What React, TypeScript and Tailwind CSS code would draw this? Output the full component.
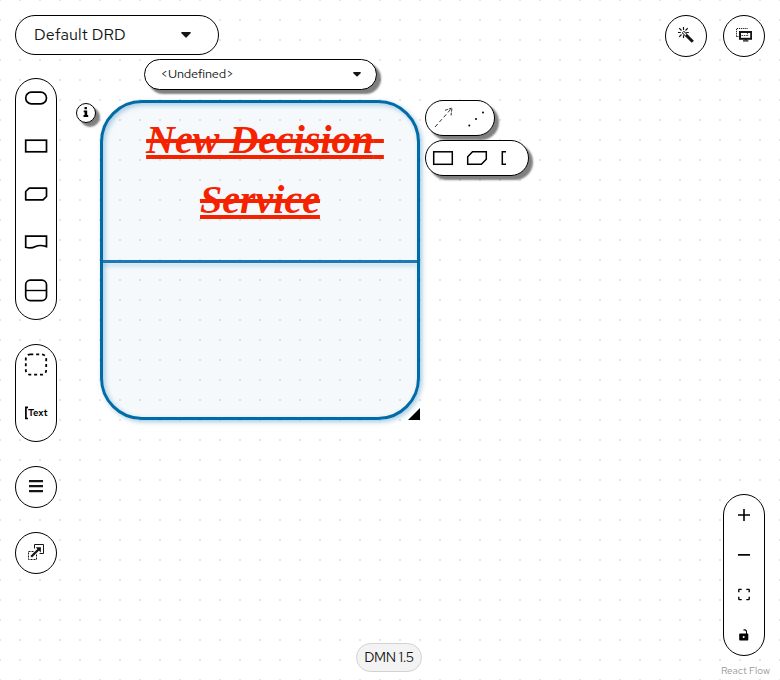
import React from "react";

const UI_FONT = "font-['Red_Hat_Text','Open_Sans','Noto_Sans',sans-serif]";

function Caret({ className = "w-[10px]" }: { className?: string }) {
  return (
    <svg className={className} height="6" viewBox="0 0 10 6" fill="#151515">
      <path d="M1 0h8c.8 0 1.100.8.6 1.300L5.700 5.300a1 1 0 0 1-1.400 0L.4 1.300C-.1.800.2 0 1 0z" />
    </svg>
  );
}

function Palette() {
  return (
    <div className="flex h-[242px] w-[42px] flex-col items-center rounded-[21px] border border-black bg-white">
      <svg width="40" height="240" viewBox="0 0 40 240" fill="none" stroke="#000" strokeWidth="1.7">
        <rect x="9.700" y="13.200" width="20.800" height="11.600" rx="5.800" />
        <rect x="9.700" y="61.200" width="20.800" height="11.600" />
        <path d="M13.200 109.200H30.500V117.500L27 120.800H9.700V112.500Z" strokeLinejoin="round" />
        <path d="M9.700 157.200H30.500V167.600C24 165.500 22 166.300 19.500 167.500C16 169.400 12 169 9.700 168.300Z" />
        <rect x="9.700" y="201.200" width="20.800" height="20.400" rx="4.600" />
        <path d="M10 211.500H30.300" strokeWidth="1.400" />
      </svg>
    </div>
  );
}

function Annotations() {
  return (
    <div className="flex h-[98px] w-[42px] flex-col items-center rounded-[21px] border border-black bg-white">
      <svg className="mt-2" width="24" height="24" viewBox="0 0 24 24" fill="none" stroke="#000" strokeWidth="1.800">
        <rect x="1.800" y="1.300" width="20.400" height="20.400" rx="4.500" strokeDasharray="3 2.880" />
      </svg>
      <div className="mt-[29px] flex h-[14px] w-6 items-center">
        <svg width="4" height="14" viewBox="0 0 4 14" fill="none" stroke="#000" strokeWidth="1.700">
          <path d="M4 1.400H1.900V12.500H4" />
        </svg>
        <span className="text-[9.500px] leading-[14px] font-semibold text-black">Text</span>
      </div>
    </div>
  );
}

function RoundButton({ children }: { children: React.ReactNode }) {
  return (
    <button className="flex h-[42px] w-[42px] items-center justify-center rounded-full border border-black bg-white">
      {children}
    </button>
  );
}

function DecisionService() {
  return (
    <div className="absolute top-[100px] left-[100px] h-[320px] w-[320px]">
      <div className="flex h-full flex-col rounded-[42px] border-[3px] border-[#006ba6] bg-[#006ba6]/[0.04] shadow-[2px_2px_5px_rgba(0,107,166,0.36),inset_2px_2px_5px_rgba(0,107,166,0.32)]">
        <div className="flex h-[157px] justify-center pt-[7px]">
          <div className="w-[290px] text-center font-['Liberation_Serif',serif] text-[40px] leading-[60px] font-bold whitespace-pre-wrap text-[#f52200] italic [text-decoration:underline_line-through]">
            New Decision Service
          </div>
        </div>
        <div className="h-[3px] bg-[#1b7ab3] shadow-[0_3px_4px_rgba(0,107,166,0.24)]" />
      </div>
      <svg className="absolute right-0 bottom-0" width="12" height="12" viewBox="0 0 12 12">
        <path d="M12 0V12H0Z" />
      </svg>
    </div>
  );
}

const floating = "absolute flex border border-black bg-white shadow-[4px_4px_2px_rgba(0,0,0,0.5)]";

export default function App() {
  return (
    <div className={`relative h-[680px] w-[780px] overflow-hidden bg-white text-[#151515] ${UI_FONT}`}>
      <div className="absolute inset-0 [background-image:conic-gradient(from_270deg_at_2px_2px,#e7e7e7_90deg,transparent_0)] [background-position:-1px_-1px] [background-size:20px_20px]" />

      <DecisionService />

      <div className={`${floating} top-[59px] left-[144px] h-[31px] w-[233px] items-center justify-between rounded-[16px] pr-[15px] pl-[15.500px]`}>
        <span className="-translate-y-px text-[12.800px] leading-4 tracking-[-0.200px]">&lt;Undefined&gt;</span>
        <Caret className="w-[8px] -translate-y-[0.500px]" />
      </div>
      <div className={`${floating} top-[103px] left-[76px] h-5 w-5 items-center justify-center rounded-full`}>
        <svg className="-translate-y-px" width="6" height="10" viewBox="0 0 6 10"><path d="M1.500 0h2.400v2.200H1.500zM.7 3.400h3.500v4.700h1V10H.5V8.100h1.100V5.300H.7z" /></svg>
      </div>
      <div className={`${floating} top-[100px] left-[425px] h-9 w-[70px] rounded-[18px]`}>
        <svg width="68" height="34" viewBox="0 0 68 34" fill="none" stroke="#000">
          <path d="M9 26L25 8" strokeDasharray="4 2.500" strokeWidth=".8" />
          <path d="M19 9.300L26 7L25 14.500" strokeDasharray="3 1" strokeWidth=".8" />
          <g fill="#000" stroke="none"><circle cx="43.300" cy="24.500" r="1" /><circle cx="50" cy="18" r="1" /><circle cx="57" cy="11.500" r="1" /></g>
        </svg>
      </div>
      <div className={`${floating} top-[140px] left-[425px] h-9 w-[104px] rounded-[18px]`}>
        <svg width="102" height="34" viewBox="0 0 102 34" fill="none" stroke="#000" strokeWidth="1.500">
          <rect x="7.700" y="10.800" width="18.600" height="12.500" />
          <path d="M46.500 10.800H60.300V18.200L55.400 23.300H41.700V15.800Z" />
          <path d="M80 10.800H76.300V23.300H80" />
        </svg>
      </div>

      <div className="pointer-events-none absolute inset-0 flex justify-between p-[15px]">
        <div className="flex flex-col items-start">
          <button className="flex h-10 w-[204px] items-center justify-between rounded-[20px] border border-black bg-white pr-[27px] pl-[18px]">
            <span className="text-[16px] leading-6 tracking-[0.160px]">Default DRD</span>
            <Caret />
          </button>
          <div className="mt-[23px] flex flex-col gap-6">
            <Palette />
            <Annotations />
            <RoundButton>
              <svg width="14" height="14" viewBox="0 0 14 14"><path d="M0 0h14v2.300H0zM0 5h14v2.300H0zM0 10h14v2.300H0z" fill="#151515" /></svg>
            </RoundButton>
            <RoundButton>
              <svg className="-translate-y-px" width="16" height="16" viewBox="0 0 16 16" fill="none" stroke="#151515">
                <path d="M6.500 4.500V.5H15.500V9.500H11.500" />
                <path d="M5.500 7.500H.5V15.500H8.500V10.500" strokeDasharray="2 1" />
                <path d="M3.200 12.800L11 5" strokeWidth="2.300" />
                <path d="M7.700 3.200H12.900V8.400Z" fill="#151515" stroke="none" />
              </svg>
            </RoundButton>
          </div>
        </div>

        <div className="flex flex-col items-end justify-between">
          <div className="flex gap-4">
            <RoundButton>
              <svg className="-translate-y-px" width="16" height="16" viewBox="0 0 16 16" fill="none" stroke="#151515">
                <path d="M5.500 0V3M1.200 1.200L3.500 3.500M0 5.500H2.800M1.200 9.800L3.500 7.500M5.500 8.200V11M9.800 1.200L7.500 3.500M8.200 5.500H10.800" strokeWidth="1.200" />
                <path d="M4.900 4.900L14.800 14.800" strokeWidth="3" />
                <path d="M5.300 5.300L8 8" stroke="#fff" strokeWidth="1.300" />
              </svg>
            </RoundButton>
            <RoundButton>
              <svg className="-translate-y-px" width="16" height="14" viewBox="0 0 16 14" fill="none" stroke="#151515">
                <path d="M.5 8.500V.5H12" strokeDasharray="1.200 .9" />
                <path d="M.5 8.500H3" strokeDasharray="1.200 .9" />
                <rect x="4" y="4" width="11.200" height="6.800" strokeWidth="2" fill="#fff" />
                <path d="M5.500 7.500H12.500" strokeDasharray="1.500 .8" strokeWidth=".8" />
                <path d="M11.500 5V7.500" strokeDasharray="1 .8" strokeWidth=".8" />
                <path d="M7 12.800H12.400M8.700 11.500H10.700" strokeWidth="1.200" />
              </svg>
            </RoundButton>
          </div>
          <div className="mb-[9px] flex h-[162px] w-[42px] flex-col items-center rounded-[21px] border border-black bg-white">
            <div className="flex h-10 items-center"><svg width="12" height="12" viewBox="0 0 12 12"><path d="M5.200 0h1.600v5.200H12v1.600H6.800V12H5.200V6.800H0V5.200h5.200z" /></svg></div>
            <div className="flex h-10 items-center"><svg width="12" height="2" viewBox="0 0 12 2"><path d="M0 0h12v1.700H0z" /></svg></div>
            <div className="flex h-10 items-center"><svg className="-translate-y-[0.500px]" width="12" height="12" viewBox="0 0 12 12" fill="none" stroke="#000" strokeWidth="1.400"><path d="M.8 3.700V1.500Q.8.800 1.500.8H3.700M8.300.8h2.200q.7 0 .7.700v2.200M11.200 8.300v2.200q0 .7-.7.700H8.300M3.700 11.200H1.500q-.7 0-.7-.7V8.300" /></svg></div>
            <div className="flex h-10 items-center"><svg width="10" height="12" viewBox="0 0 10 12"><path fillRule="evenodd" d="M1 4.500h6V3.200C7 1.700 6 1.100 4.500 1.500L4.200.8C6.500-.3 8 .8 8 3v1.500h.5q.8 0 .8.800v5.200q0 1-.8 1H1q-.8 0-.8-1V5.300q0-.8.800-.8zM4.700 6.900a1 1 0 1 0 0 2 1 1 0 0 0 0-2z" /></svg></div>
          </div>
        </div>
      </div>
      <div className="absolute top-[643px] left-[356px] flex h-[29px] w-[66px] items-center justify-center rounded-[15px] border border-[#d2d2d2] bg-[#f3f3f3] pb-0.5 text-[14px] leading-5 tracking-[-0.350px] whitespace-nowrap">DMN 1.5</div>
      <div className="absolute top-[664px] right-[10px] text-[10px] leading-[14px] whitespace-nowrap text-[#999]">React Flow</div>
    </div>
  );
}
